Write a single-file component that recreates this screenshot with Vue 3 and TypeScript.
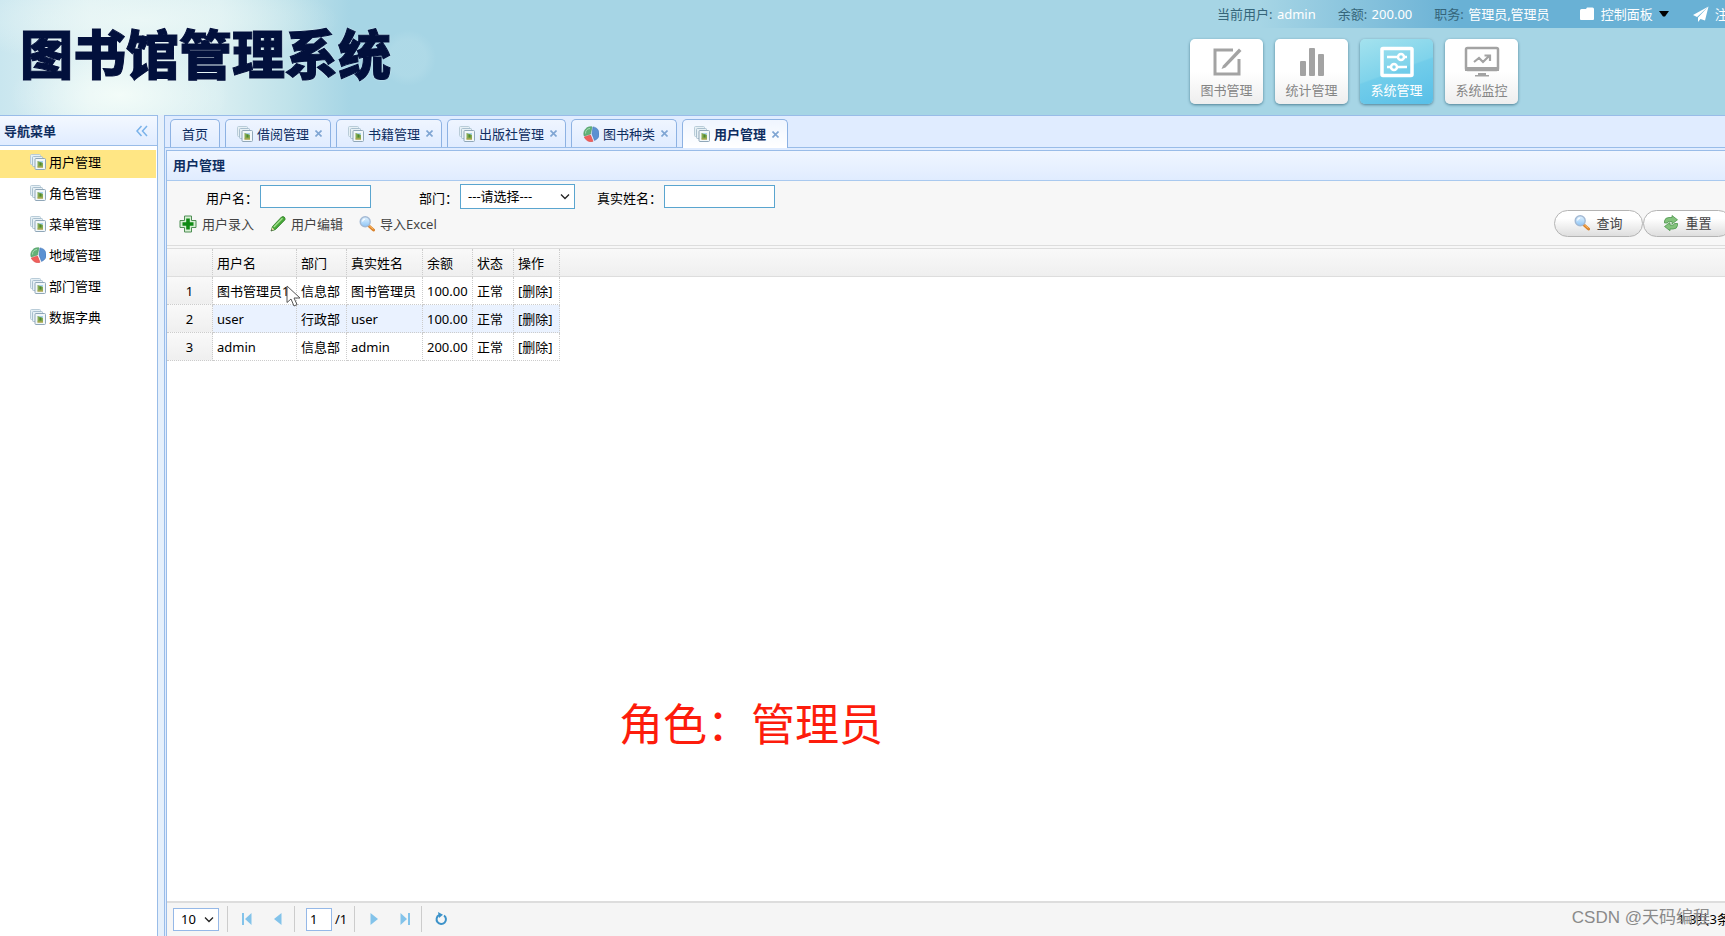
<script setup lang="ts">
import { ref } from 'vue'

interface Tab { title: string; icon: string; closable: boolean; active?: boolean }
interface Row { name: string; dept: string; real: string; money: string; state: string }

const bigButtons = [
  { label: '图书管理', icon: 'edit' },
  { label: '统计管理', icon: 'bars' },
  { label: '系统管理', icon: 'sliders', active: true },
  { label: '系统监控', icon: 'monitor' },
]
const menu = [
  { label: '用户管理', icon: 'stack', active: true },
  { label: '角色管理', icon: 'stack' },
  { label: '菜单管理', icon: 'stack' },
  { label: '地域管理', icon: 'pie' },
  { label: '部门管理', icon: 'stack' },
  { label: '数据字典', icon: 'stack' },
]
const tabs: Tab[] = [
  { title: '首页', icon: '', closable: false },
  { title: '借阅管理', icon: 'stack', closable: true },
  { title: '书籍管理', icon: 'stack', closable: true },
  { title: '出版社管理', icon: 'stack', closable: true },
  { title: '图书种类', icon: 'pie', closable: true },
  { title: '用户管理', icon: 'stack', closable: true, active: true },
]
const rows: Row[] = [
  { name: '图书管理员1', dept: '信息部', real: '图书管理员', money: '100.00', state: '正常' },
  { name: 'user', dept: '行政部', real: 'user', money: '100.00', state: '正常' },
  { name: 'admin', dept: '信息部', real: 'admin', money: '200.00', state: '正常' },
]
const userName = ref('')
const realName = ref('')
const page = ref('1')
</script>

<template>
  <div class="app">
    <svg class="defs" width="0" height="0" aria-hidden="true">
      <defs>
        <linearGradient id="lens" x1="0" y1="0" x2="0" y2="1">
          <stop offset="0" stop-color="#e4f4ff" /><stop offset="1" stop-color="#8cc4f6" />
        </linearGradient>
        <symbol id="stack" viewBox="0 0 16 16">
          <rect x="0.5" y="0.5" width="10" height="10" rx="1" fill="#e6f0f5" stroke="#b9ccd8" />
          <rect x="2.5" y="2.5" width="10" height="10" rx="1" fill="#e6f0f5" stroke="#a9bfce" />
          <rect x="5" y="4.5" width="10.5" height="11" rx="1" fill="#f2f7f9" stroke="#90a7b9" />
          <rect x="7.500" y="7" width="5.500" height="6.500" fill="#86a951" />
          <path d="M7.500 7H13v2l-3-1z" fill="#a9d2ec" />
          <path d="M9.500 8.500h2v3h-2z" fill="#4c8a30" />
          <path d="M7.500 12.500H13v1H7.500z" fill="#b9a34a" />
        </symbol>
        <symbol id="pie" viewBox="0 0 16 16">
          <path d="M7.500 8 1.200 10A7 7 0 0 1 9 .8z" fill="#62b277" stroke="#4b9962" stroke-width=".6" />
          <path d="M9 8 10 .9a7 7 0 0 1 1.500 13.500z" fill="#5b91d2" stroke="#4176b8" stroke-width=".6" />
          <path d="M7.500 9 10 15.300A7 7 0 0 1 1.300 11z" fill="#f0605c" stroke="#d84848" stroke-width=".6" />
          <path d="M2.500 7.500a5 5 0 0 1 4.500-5" fill="none" stroke="#a7dab3" />
        </symbol>
        <symbol id="search" viewBox="0 0 16 16">
          <path d="m10 10 4.500 4" stroke="#d9822b" stroke-width="3" stroke-linecap="round" />
          <path d="m10.500 10 3.500 3" stroke="#ffbd66" stroke-width="1" stroke-linecap="round" />
          <circle cx="6.200" cy="5.800" r="5" fill="url(#lens)" stroke="#a3b9d4" stroke-width="1.400" />
          <path d="M3.500 5.500a3 3 0 0 1 2.500-2.500" fill="none" stroke="#fff" stroke-width="1.200" />
        </symbol>
        <symbol id="add" viewBox="0 0 18 18">
          <path d="M5.500 1h7v4.500H17v7h-4.500V17h-7v-4.500H1v-7h4.500z" fill="#d7efd4" stroke="#4f8e54" stroke-linejoin="round" />
          <path d="M7.200 3.500h3.600v3.700h3.700v3.600h-3.700v3.700H7.200v-3.700H3.500V7.200h3.700z" fill="#0f8a14" />
        </symbol>
        <symbol id="pencil" viewBox="0 0 16 16">
          <path d="M1 15l1.500-4.500L11.500 1q1.500-1 2.700 0t.8 2.800l-9.500 9.700z" fill="#47a839" stroke="#2e7c25" stroke-width=".8" stroke-linejoin="round" />
          <path d="M3.800 11 12.500 2.200" stroke="#a5df8f" stroke-width="1.400" />
          <path d="M1 15l1.200-3.500 2 2z" fill="#f0dcae" />
          <path d="M1 15l.6-1.700 1 1z" fill="#333" />
        </symbol>
        <symbol id="reload" viewBox="0 0 16 16">
          <path d="M1.500 8V6Q2 2.500 6 2.500h3V.5l5.500 4.300L9 9V6.500H6.500Q4.500 6.500 4.500 8z" fill="#83c27c" stroke="#4c964d" stroke-width=".8" stroke-linejoin="round" />
          <path d="M14.500 8.500v2Q14 14 10 14H7v1.700l-5.500-4.200L7 7.500V10h2.500q2 0 2-1.500z" fill="#83c27c" stroke="#4c964d" stroke-width=".8" stroke-linejoin="round" />
        </symbol>
        <symbol id="edit" viewBox="0 0 36 32">
          <path d="M24 4H6v24h24V13" fill="none" stroke="currentColor" stroke-width="3" />
          <path d="M14 19.500 30 2.500l2.500 2.500-16 16.500-4 1.500z" fill="currentColor" />
        </symbol>
        <symbol id="bars" viewBox="0 0 36 32">
          <rect x="6" y="15" width="6" height="15" rx="1" fill="currentColor" />
          <rect x="15" y="2" width="6" height="28" rx="1" fill="currentColor" />
          <rect x="24" y="8" width="6" height="22" rx="1" fill="currentColor" />
        </symbol>
        <symbol id="sliders" viewBox="0 0 36 32">
          <rect x="3" y="2.500" width="30" height="27" rx="1" fill="none" stroke="currentColor" stroke-width="3.500" />
          <g fill="none" stroke="currentColor" stroke-width="2.500">
            <path d="M8 11h10M26 11h2M8 21h3M19 21h9" />
            <circle cx="22" cy="11" r="3" /><circle cx="15" cy="21" r="3" />
          </g>
        </symbol>
        <symbol id="monitor" viewBox="0 0 36 32">
          <rect x="2" y="2" width="32" height="22" rx="1.500" fill="none" stroke="currentColor" stroke-width="2.500" />
          <path d="M1 21h34v4H1zM14 27h8v2h3v1.500H11V29h3z" fill="currentColor" />
          <path d="m10 16 5-4 4 4 6-6M20.500 9.500H26V15" fill="none" stroke="currentColor" stroke-width="2.200" />
        </symbol>
      </defs>
    </svg>

    <header class="header">
      <h1 class="brand">图书馆管理系统</h1>
      <div class="head-right">
        <div class="userbar">
          <span class="info">当前用户: <b>admin</b></span>
          <span class="info">余额: <b>200.00</b></span>
          <span class="info">职务: <b>管理员,管理员</b></span>
          <button class="top-link panel" type="button">
            <svg width="16" height="14" viewBox="0 0 16 14"><path d="M1 3.500Q1 2 2.500 2H7l1-1.500h5.500Q15 .5 15 2v10q0 1-1 1H2q-1 0-1-1z" fill="#fff" /></svg>
            控制面板
            <svg width="10" height="6" viewBox="0 0 10 6"><path d="M0 0h10L6 5.500H4z" fill="#000" /></svg>
          </button>
          <button class="top-link" type="button">
            <svg width="16" height="16" viewBox="0 0 16 16"><path d="M15.500.5 0 9l4 2zM15.500.5 5 11.500V16l2.500-3L12 14.500z" fill="#fff" /></svg>
            注销
          </button>
        </div>
        <nav class="modules">
          <button v-for="b in bigButtons" :key="b.label" type="button" class="module" :class="{ active: b.active }">
            <svg width="36" height="32"><use :href="'#' + b.icon" /></svg>
            <span>{{ b.label }}</span>
          </button>
        </nav>
      </div>
    </header>

    <div class="body">
      <aside class="side">
        <div class="side-head">
          <h2>导航菜单</h2>
          <button type="button" class="collapse" aria-label="收起">
            <svg width="12" height="12" viewBox="0 0 12 12"><path d="M5.500 1 1 6l4.500 5M11 1 6.500 6l4.500 5" fill="none" stroke="#79b2ea" stroke-width="1.500" /></svg>
          </button>
        </div>
        <ul class="menu">
          <li v-for="m in menu" :key="m.label">
            <a href="#" :class="{ active: m.active }"><svg width="16" height="16"><use :href="'#' + m.icon" /></svg>{{ m.label }}</a>
          </li>
        </ul>
      </aside>

      <main class="main">
        <div class="tabs">
          <div v-for="t in tabs" :key="t.title" class="tab" :class="{ active: t.active, plain: !t.closable }">
            <svg v-if="t.icon" width="16" height="16"><use :href="'#' + t.icon" /></svg>
            <a href="#">{{ t.title }}</a>
            <button v-if="t.closable" type="button" class="close" aria-label="关闭">
              <svg width="7" height="7" viewBox="0 0 7 7"><path d="m.5.5 6 6m0-6-6 6" stroke="#7fa5d3" stroke-width="1.600" /></svg>
            </button>
          </div>
        </div>

        <section class="panel-box">
          <h2 class="panel-title">用户管理</h2>
          <div class="tools">
            <form class="filters" @submit.prevent>
              <label for="f-user">用户名：</label>
              <input id="f-user" v-model="userName" class="text" type="text" />
              <label class="dept" for="f-dept">部门：</label>
              <span class="select-wrap">
                <select id="f-dept"><option>---请选择---</option></select>
                <svg width="10" height="6" viewBox="0 0 10 6"><path d="m1 .5 4 4 4-4" fill="none" stroke="#222" stroke-width="1.300" /></svg>
              </span>
              <label class="real" for="f-real">真实姓名：</label>
              <input id="f-real" v-model="realName" class="text" type="text" />
            </form>
            <div class="actions">
              <button type="button" class="act"><svg width="18" height="18"><use href="#add" /></svg>用户录入</button>
              <button type="button" class="act"><svg width="16" height="16"><use href="#pencil" /></svg>用户编辑</button>
              <button type="button" class="act"><svg width="16" height="16"><use href="#search" /></svg>导入Excel</button>
              <div class="pills">
                <button type="button" class="pill"><svg width="16" height="16"><use href="#search" /></svg>查询</button>
                <button type="button" class="pill"><svg width="16" height="16"><use href="#reload" /></svg>重置</button>
              </div>
            </div>
          </div>

          <div class="grid">
            <table>
              <colgroup>
                <col class="c-no" /><col class="c-name" /><col class="c-dept" /><col class="c-real" />
                <col class="c-money" /><col class="c-state" /><col class="c-op" /><col />
              </colgroup>
              <thead>
                <tr><th></th><th>用户名</th><th>部门</th><th>真实姓名</th><th>余额</th><th>状态</th><th>操作</th><th class="rest"></th></tr>
              </thead>
              <tbody>
                <tr v-for="(r, i) in rows" :key="r.name" :class="{ alt: i === 1 }">
                  <td class="no">{{ i + 1 }}</td>
                  <td>{{ r.name }}</td><td>{{ r.dept }}</td><td>{{ r.real }}</td>
                  <td>{{ r.money }}</td><td>{{ r.state }}</td><td><a href="#">[删除]</a></td><td class="rest"></td>
                </tr>
              </tbody>
            </table>
            <svg class="cursor" width="15" height="22" viewBox="0 0 15 22"><path d="M1 1v16.500l4-3.500 3 7 3-1.500-3-6.500h6z" fill="#fff" stroke="#555" /></svg>
          </div>

          <footer class="pager">
            <span class="select-wrap size">
              <select aria-label="每页条数"><option>10</option></select>
              <svg width="10" height="6" viewBox="0 0 10 6"><path d="m1 .5 4 4 4-4" fill="none" stroke="#222" stroke-width="1.300" /></svg>
            </span>
            <i class="sep"></i>
            <button type="button" aria-label="首页"><svg width="12" height="12" viewBox="0 0 12 12"><path d="M1 0h2v12H1zM10.500 0v12L4 6z" fill="#83c3ea" /></svg></button>
            <button type="button" aria-label="上一页"><svg width="12" height="12" viewBox="0 0 12 12"><path d="M9.500 0v12L2 6z" fill="#83c3ea" /></svg></button>
            <i class="sep"></i>
            <label class="pg"><input v-model="page" type="text" aria-label="页码" />/1</label>
            <i class="sep"></i>
            <button type="button" aria-label="下一页"><svg width="12" height="12" viewBox="0 0 12 12"><path d="M2.500 0v12L10 6z" fill="#83c3ea" /></svg></button>
            <button type="button" aria-label="末页"><svg width="12" height="12" viewBox="0 0 12 12"><path d="M9 0h2v12H9zM1.500 0v12L8 6z" fill="#83c3ea" /></svg></button>
            <i class="sep"></i>
            <button type="button" aria-label="刷新"><svg width="14" height="14" viewBox="0 0 14 14"><path d="M10 3.500A4.700 4.700 0 1 1 5 3.200" fill="none" stroke="#3c92c9" stroke-width="2" /><path d="M4 0l5 2.700L5 6z" fill="#3c92c9" /></svg></button>
            <span class="total">1-3共3条</span>
          </footer>
        </section>
      </main>
    </div>

    <p class="caption">角色：管理员</p>
    <p class="mark">CSDN @天码编程</p>
  </div>
</template>

<style>
html, body, #app { height: 100%; }
body { margin: 0; overflow: hidden; }
</style>

<style scoped>
.app {
  position: relative;
  display: flex;
  flex-direction: column;
  height: 100%;
  overflow: hidden;
  background: #fff;
  color: #000;
  font: 13px/16px "Noto Sans", "Noto Sans CJK SC", sans-serif;
}
.defs { position: absolute; }
h1, h2, p, ul { margin: 0; padding: 0; }
li { list-style: none; }
svg { display: block; flex: none; }
a { color: inherit; text-decoration: none; }
button { padding: 0; border: 0; background: none; font: inherit; color: inherit; cursor: pointer; }
input, select { box-sizing: border-box; margin: 0; font: inherit; color: #000; background: #fff; border: 1px solid #5aa5cf; border-radius: 0; outline: 0; }

.header {
  display: flex;
  justify-content: space-between;
  height: 115px;
  background:
    radial-gradient(circle at 408px 58px, rgba(190, 226, 236, .35) 0 18px, transparent 28px),
    radial-gradient(ellipse 110px 50px at 120px 95px, rgba(248, 255, 250, .8), transparent),
    radial-gradient(ellipse 200px 45px at 140px 20px, rgba(238, 249, 247, .8), transparent),
    linear-gradient(90deg, #c9e6ef 0, #dff1f3 90px, #d8eef1 220px, #bfe2ea 290px, #a6d5e5 350px);
}
.brand {
  padding: 14px 0 0 20px;
  color: #02103c;
  font: 900 53px/76px "Noto Sans CJK SC", sans-serif;
  -webkit-text-stroke: 1px #02103c;
  text-shadow: 0 0 2px #fff;
  white-space: nowrap;
}
.head-right { flex: none; width: 555px; }
.userbar {
  box-sizing: border-box;
  display: flex;
  align-items: center;
  height: 28px;
  padding-left: 47px;
  background: linear-gradient(90deg, #a6d5e500 90px, #69b1d5 290px);
  color: #35657a;
  white-space: nowrap;
}
.info { margin-right: 22px; }
.info b { margin-left: 1px; color: #fff; font-weight: 400; }
.top-link { display: flex; align-items: center; gap: 6px; color: #fff; }
.top-link.panel { margin: 0 24px 0 7px; }
.modules { display: flex; gap: 12px; padding: 11px 0 0 20px; }
.module {
  box-sizing: border-box;
  display: flex;
  flex-direction: column;
  align-items: center;
  width: 73px;
  height: 65px;
  padding-top: 7px;
  border-radius: 5px;
  background: linear-gradient(#fff 50%, #eee);
  box-shadow: 0 1px 3px #4c7f94;
  color: #a3a3a3;
}
.module span { margin-top: 4px; color: #858585; line-height: 16px; }
.module.active { background: linear-gradient(160deg, #a4e2ee, #7fd3eb 48%, #72cdea 50%, #58bfe8); color: #fff; }
.module.active span { color: #fff; }

.body { display: flex; flex: 1; min-height: 0; background: #e6f0fb; }
.side { flex: none; width: 157px; border: solid #99bce8; border-width: 1px 1px 0 0; background: #fff; }
.side-head {
  display: flex;
  align-items: center;
  justify-content: space-between;
  height: 29px;
  padding: 0 9px 0 4px;
  border-bottom: 1px solid #99bce8;
  background: linear-gradient(#f3f8ff, #e0ecff);
}
.side-head h2, .panel-title { color: #0e2d5f; font-size: 13px; font-weight: 700; }
.menu { padding: 4px 1px 0 0; }
.menu a { display: flex; align-items: center; gap: 3px; height: 24px; margin-bottom: 3px; padding: 0 0 4px 30px; }
.menu a svg { margin-bottom: 1px; }
.menu .active { background: #ffe684; }

.main { display: flex; flex-direction: column; flex: 1; min-width: 0; margin-left: 6px; border: solid #99bce8; border-width: 1px 0 0 1px; background: #e0ecff; }
.tabs { display: flex; align-items: flex-end; gap: 5px; height: 31px; padding: 0 5px; border-bottom: 1px solid #99bce8; }
.tab {
  display: flex;
  align-items: center;
  box-sizing: border-box;
  height: 28px;
  padding: 0 8px 0 11px;
  border: 1px solid #8db2e3;
  border-bottom: 0;
  border-radius: 5px 5px 0 0;
  background: linear-gradient(#eff5ff, #e0ecff);
  color: #0e2d5f;
}
.tab.plain { padding: 0 11px; }
.tab a { padding: 0 6px 0 4px; }
.tab.plain a { padding: 0; }
.tab.active { height: 29px; margin-bottom: -1px; background: linear-gradient(#eff5ff, #fff); font-weight: 700; }

.panel-box { display: flex; flex-direction: column; flex: 1; min-height: 0; margin: 2px 0 0 1px; border: solid #99bce8; border-width: 1px 0 0 1px; background: #fff; }
.panel-title { height: 29px; padding-left: 6px; border-bottom: 1px solid #a9c9ef; background: linear-gradient(#f0f6ff, #e0ecff); line-height: 29px; }
.tools { padding: 3px 0 2px; background: #f7f7f7; }
.filters { display: flex; align-items: center; height: 24px; padding-left: 39px; }
.filters label { padding: 3px 2px 0 0; }
.filters .dept { margin-left: 48px; }
.filters .real { margin-left: 22px; }
.text { width: 111px; height: 23px; padding: 0 4px; }
.select-wrap { position: relative; display: flex; }
.select-wrap select { width: 115px; height: 25px; padding: 0 7px; appearance: none; }
.select-wrap svg { position: absolute; right: 5px; top: 10px; pointer-events: none; }
.actions { display: flex; align-items: center; gap: 16px; height: 32px; padding: 0 0 5px 12px; border-bottom: 1px solid #ddd; color: #444; }
.act { display: flex; align-items: center; gap: 5px; }
.pills { display: flex; margin: 0 -7px 2px auto; }
.pill {
  box-sizing: border-box;
  display: flex;
  align-items: center;
  justify-content: center;
  gap: 6px;
  width: 89px;
  height: 27px;
  border: 1px solid #b4b4b4;
  border-radius: 14px;
  background: linear-gradient(#fff 30%, #dedede);
}

.grid { position: relative; flex: 1; min-height: 0; border-top: 1px solid #ddd; }
table { width: 100%; table-layout: fixed; border-collapse: separate; border-spacing: 0; }
.c-no { width: 46px; } .c-name { width: 84px; } .c-dept { width: 50px; } .c-real { width: 76px; }
.c-money { width: 50px; } .c-state { width: 41px; } .c-op { width: 46px; }
th, td { box-sizing: border-box; height: 28px; padding: 0 0 0 4px; border: dotted #ccc; border-width: 0 1px 1px 0; font-weight: 400; text-align: left; white-space: nowrap; overflow: hidden; }
th { border-bottom: 1px solid #ddd; background: linear-gradient(#f9f9f9, #efefef); }
th.rest { border-right: 0; }
td.rest { border: 0; background: #fff; }
td.no { padding: 0; background: linear-gradient(#f9f9f9, #efefef); text-align: center; }
.alt { background: #eaf2ff; }
.cursor { position: absolute; left: 119px; top: 36px; }

.pager { display: flex; align-items: center; height: 32px; padding: 0 0 1px 6px; border-top: 2px solid #ddd; background: #f5f5f5; }
.size { margin-right: 3px; }
.size select { width: 46px; height: 23px; border-color: #95b8e7; }
.size svg { top: 9px; }
.sep { width: 1px; height: 26px; margin: 0 8px 0 5px; background: #ccc; }
.pager button { display: flex; justify-content: center; width: 22px; }
.pager button + button { margin-left: 9px; }
.pg { display: flex; align-items: center; gap: 3px; margin: 0 2px 0 3px; }
.pg input { width: 26px; height: 23px; padding: 0 3px; border-color: #95b8e7; }
.total { margin: 0 -5px 0 auto; white-space: nowrap; }

.caption { position: absolute; left: 619px; top: 690px; color: #fd1c0c; font: 44px/64px "Noto Sans CJK SC", sans-serif; }
.mark { position: absolute; right: 15px; bottom: 6px; color: #8a8a8a; font: 17px/24px "Liberation Sans", "Noto Sans CJK SC", sans-serif; }
</style>
